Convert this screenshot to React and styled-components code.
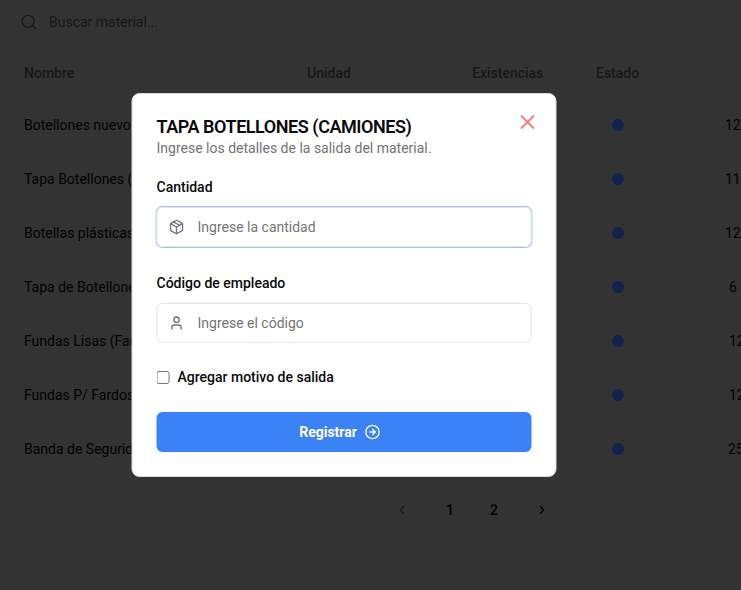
import React from 'react';
import styled, { createGlobalStyle } from 'styled-components';
import { Search, ChevronLeft, ChevronRight, X, CircleArrowRight, Package } from 'lucide-react';
import { LuUser } from 'react-icons/lu';

const GlobalStyle = createGlobalStyle`
  * { box-sizing: border-box; }
  body { margin: 0; overflow: hidden; background: #333; }
  body, input, button { font-family: Roboto, "Liberation Sans", sans-serif; font-size: 14px; }
`;

const Page = styled.main`
  height: 590px;
  width: 741px;
  overflow: hidden;
  color: #020203;
  display: flex;
  flex-direction: column;
`;

const SearchBar = styled.div`
  height: 46px;
  padding: 0 0 2px 20px;
  display: flex;
  align-items: center;
  gap: 11px;
  color: #171717;
  flex: none;
`;

const TableRow = styled.div`
  display: grid;
  grid-template-columns: 283px 165px 124px 129px 60px;
  height: 54px;
  flex: none;
  padding-left: 24px;
  align-items: center;
  white-space: nowrap;
`;

const HeaderRow = styled(TableRow)`
  height: 52px;
  padding-top: 1px;
  font-weight: 500;
  color: #17171a;
`;

const Amount = styled.span`
  padding-left: ${(p) => p.$inset}px;
`;

const Dot = styled.span`
  width: 12px;
  height: 12px;
  border-radius: 50%;
  background: #12234d;
  margin-left: 16px;
`;

const Pagination = styled.nav`
  display: flex;
  align-items: center;
  height: 32px;
  margin: 18px 0 0 376px;
  font-weight: 500;
`;

const PageLink = styled.span`
  width: 44px;
  text-align: center;
`;

const Arrow = styled.span`
  display: flex;
  justify-content: center;
  width: ${(p) => p.$width}px;
  color: ${(p) => (p.$muted ? '#1b1b1b' : '#020203')};
`;

const Overlay = styled.div`
  position: fixed;
  inset: 0;
  display: grid;
  align-items: start;
  justify-items: start;
  padding: 93px 0 0 131px;
`;

const Dialog = styled.section`
  width: 425px;
  height: 384px;
  padding: 24px;
  border: 1px solid #dcdcdc;
  border-radius: 8px;
  background: #fff;
  color: #09090b;
  display: flex;
  flex-direction: column;
  transform: translateX(0.5px);
`;

const DialogHeader = styled.header`
  display: flex;
  justify-content: space-between;
  height: 59px;
  flex: none;
`;

const Title = styled.h2`
  margin: 0;
  font-size: 18px;
  line-height: 18px;
  font-weight: 600;
  letter-spacing: -0.45px;
`;

const Description = styled.p`
  margin: 2px 0 0;
  line-height: 20px;
  color: #737373;
`;

const CloseButton = styled.button`
  width: 24px;
  height: 24px;
  padding: 0;
  border: 0;
  background: none;
  color: #f47d7d;
  margin: -8px -8px 0 0;
  display: grid;
  place-items: center;
`;

const Field = styled.div`
  display: flex;
  flex-direction: column;
  gap: 10px;
  height: 96px;
  flex: none;
`;

const Label = styled.label`
  font-weight: 500;
  line-height: 20px;
`;

const InputBox = styled.div`
  height: 40px;
  display: flex;
  align-items: center;
  gap: 13px;
  padding-left: 11px;
  border: 1px solid ${(p) => (p.$active ? '#dfe8f8' : '#e4e4e7')};
  box-shadow: ${(p) => (p.$active ? '0 0 0 1px #a9c1ee' : 'none')};
  border-radius: 6px;
  color: ${(p) => (p.$active ? '#6b7280' : '#737373')};
`;

const TextInput = styled.input`
  flex: 1;
  min-width: 0;
  border: 0;
  outline: 0;
  padding: 0;
  background: transparent;
  &::placeholder { color: #757575; opacity: 1; }
`;

const CheckRow = styled.label`
  display: flex;
  align-items: center;
  gap: 8px;
  height: 20px;
  margin-top: -2px;
  font-weight: 500;
`;

const Checkbox = styled.input`
  width: 13px;
  height: 13px;
  margin: 0;
`;

const SubmitButton = styled.button`
  height: 40px;
  margin-top: 25px;
  border: 0;
  border-radius: 6px;
  background: #3b82f6;
  color: #fff;
  font-weight: 700;
  display: flex;
  align-items: center;
  justify-content: center;
  gap: 8px;
  padding: 0 8px 0 0;
`;

const materials = [
  ['Botellones nuevos', '12', 0],
  ['Tapa Botellones (Camiones)', '11', 0],
  ['Botellas plásticas', '12', 0],
  ['Tapa de Botellones', '6', 4],
  ['Fundas Lisas (Fardos)', '12', 4],
  ['Fundas P/ Fardos', '12', 4],
  ['Banda de Seguridad', '25', 3],
];

export default function App() {
  return (
    <>
      <GlobalStyle />
      <Page>
        <SearchBar>
          <Search size={18} strokeWidth={1.5} />
          <span>Buscar material...</span>
        </SearchBar>
        <HeaderRow>
          <span>Nombre</span>
          <span>Unidad</span>
          <span>Existencias</span>
          <span>Estado</span>
        </HeaderRow>
        {materials.map(([name, amount, inset]) => (
          <TableRow key={name}>
            <span>{name}</span>
            <span />
            <span />
            <Dot />
            <Amount $inset={inset}>{amount}</Amount>
          </TableRow>
        ))}
        <Pagination>
          <Arrow $width={52} $muted><ChevronLeft size={14} /></Arrow>
          <PageLink>1</PageLink>
          <PageLink>2</PageLink>
          <Arrow $width={52}><ChevronRight size={14} /></Arrow>
        </Pagination>
      </Page>
      <Overlay>
        <Dialog role="dialog">
          <DialogHeader>
            <div>
              <Title>TAPA BOTELLONES (CAMIONES)</Title>
              <Description>Ingrese los detalles de la salida del material.</Description>
            </div>
            <CloseButton aria-label="Cerrar"><X size={24} strokeWidth={1.9} /></CloseButton>
          </DialogHeader>
          <Field>
            <Label htmlFor="cantidad">Cantidad</Label>
            <InputBox $active>
              <Package size={16} strokeWidth={2} />
              <TextInput id="cantidad" placeholder="Ingrese la cantidad" />
            </InputBox>
          </Field>
          <Field>
            <Label htmlFor="codigo">Código de empleado</Label>
            <InputBox>
              <LuUser size={16} />
              <TextInput id="codigo" placeholder="Ingrese el código" />
            </InputBox>
          </Field>
          <CheckRow>
            <Checkbox type="checkbox" />
            <span>Agregar motivo de salida</span>
          </CheckRow>
          <SubmitButton>
            <span>Registrar</span>
            <CircleArrowRight size={16} />
          </SubmitButton>
        </Dialog>
      </Overlay>
    </>
  );
}
